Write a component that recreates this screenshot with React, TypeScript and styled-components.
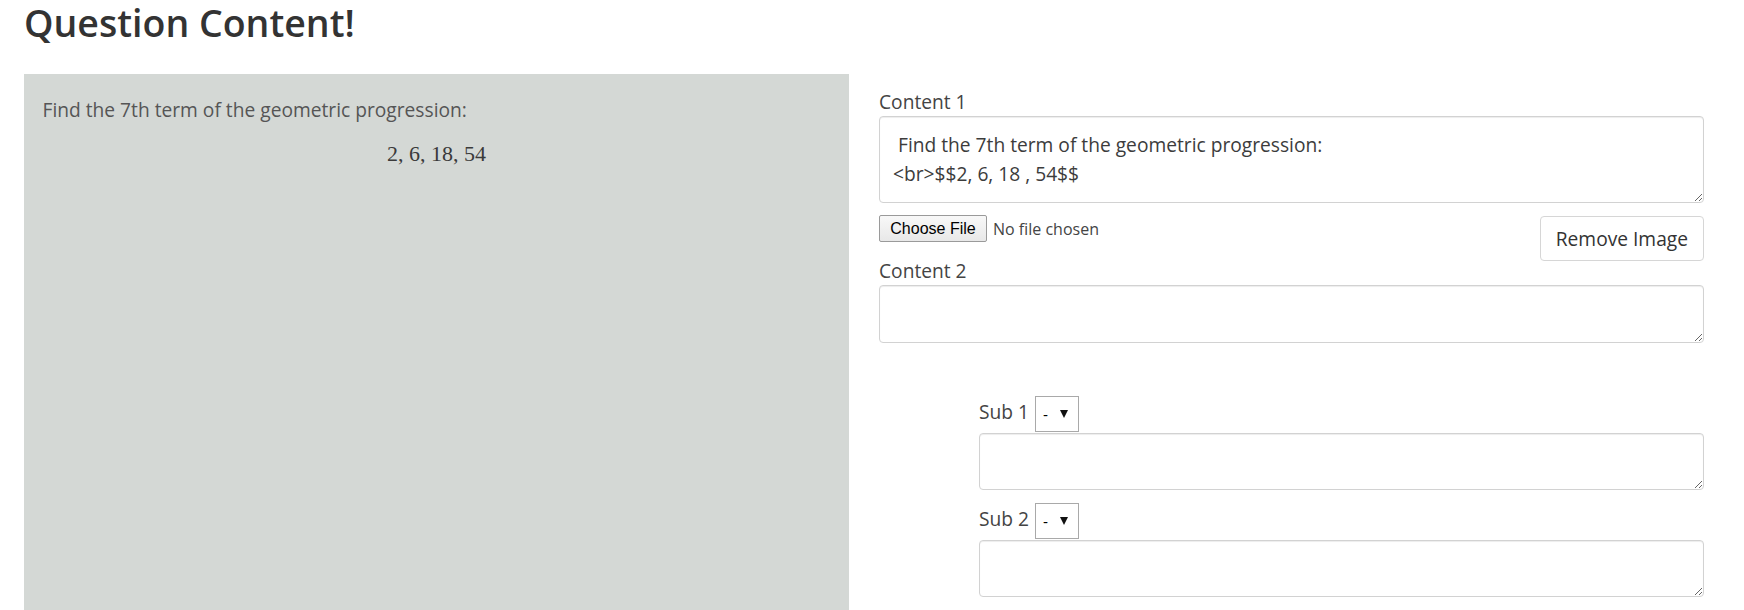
import React from "react";
import styled, { createGlobalStyle } from "styled-components";

const GlobalStyle = createGlobalStyle`
  html, body {
    margin: 0;
    padding: 0;
    background: #ffffff;
    font-family: "Open Sans", "Noto Sans", Arial, sans-serif;
    color: #333333;
    overflow: hidden;
  }
  * { box-sizing: border-box; }
`;

const Page = styled.div`
  padding: 0 0 0 22px;
`;

const Title = styled.h2`
  margin: 0 0 28px 0;
  padding-left: 2px;
  font-size: 37.5px;
  line-height: 46px;
  font-weight: 600;
  color: #333333;
`;

const Columns = styled.div`
  display: grid;
  grid-template-columns: 825px 825px;
  column-gap: 30px;
  padding-left: 2px;
  align-items: start;
`;

const PreviewPanel = styled.div`
  background: #d4d8d5;
  min-height: 560px;
  padding: 21.5px 18.5px;
`;

const PreviewText = styled.p`
  margin: 0;
  font-size: 19.2px;
  line-height: 28.8px;
  color: #555555;
`;

const MathLine = styled.div`
  text-align: center;
  font-family: "Liberation Serif", "DejaVu Serif", serif;
  font-size: 22px;
  line-height: 30px;
  color: #3a3a3a;
  margin-top: 15px;
`;

const FormColumn = styled.div`
  padding-top: 13px;
`;

const FieldLabel = styled.label`
  display: block;
  font-size: 19.2px;
  line-height: 29px;
  color: #444444;
`;

const TextArea = styled.textarea<{ $h: number; $padTop?: number }>`
  display: block;
  width: 100%;
  height: ${(p) => p.$h}px;
  margin: 0;
  padding: ${(p) => p.$padTop ?? 7}px 13px 6px 13px;
  border: 1px solid #d2d2d2;
  border-radius: 4px;
  box-shadow: inset 0 1px 1px rgba(0, 0, 0, 0.075);
  font-family: "Open Sans", "Noto Sans", Arial, sans-serif;
  font-size: 19.2px;
  line-height: 28.8px;
  color: #3c3c3c;
  background: #ffffff;
  resize: vertical;
  overflow: hidden;
  outline: none;
`;

const FileRow = styled.div`
  margin-top: 12px;
  margin-bottom: 13.5px;
`;

const RemoveButton = styled.button`
  float: right;
  height: 45px;
  margin-top: 1px;
  padding: 0 15px;
  border: 1px solid #d6d6d6;
  border-radius: 4px;
  background: #ffffff;
  font-family: "Open Sans", "Noto Sans", Arial, sans-serif;
  font-size: 19.2px;
  color: #333333;
  cursor: pointer;
`;

const FilePicker = styled.div`
  display: flex;
  align-items: center;
  height: 27px;
  gap: 6px;
`;

const ChooseButton = styled.button`
  height: 27px;
  width: 108px;
  padding: 0;
  border: 1px solid #9a9a9a;
  border-radius: 2px;
  background: linear-gradient(#f8f8f8, #e8e8e8);
  font-family: "Liberation Sans", Arial, sans-serif;
  font-size: 16px;
  color: #000000;
`;

const FileStatus = styled.span`
  font-size: 16px;
  color: #444444;
`;

const SubSection = styled.div`
  margin-top: 53.5px;
  padding-left: 100px;
  display: flex;
  flex-direction: column;
  gap: 13px;
`;

const SubBlock = styled.div`
  display: flex;
  flex-direction: column;
  gap: 1px;
`;

const SubHeader = styled.div`
  display: flex;
  align-items: flex-start;
  gap: 6px;
  height: 36px;
`;

const SubLabel = styled.span`
  font-size: 19.2px;
  line-height: 28.8px;
  color: #444444;
  padding-top: 1.5px;
`;

const SelectWrap = styled.span`
  position: relative;
  display: inline-block;
  width: 44px;
  height: 36px;
`;

const PlainSelect = styled.select`
  appearance: none;
  -webkit-appearance: none;
  width: 44px;
  height: 36px;
  margin: 0;
  padding: 0 0 0 7px;
  border: 1px solid #a9a9a9;
  border-radius: 0;
  background: #ffffff;
  font-family: "Liberation Sans", Arial, sans-serif;
  font-size: 15px;
  color: #000000;
  outline: none;
`;

const Arrow = styled.span`
  position: absolute;
  right: 11px;
  top: 14px;
  width: 0;
  height: 0;
  border-left: 4px solid transparent;
  border-right: 4px solid transparent;
  border-top: 8px solid #111111;
  pointer-events: none;
`;

const SubField: React.FC<{ label: string }> = ({ label }) => (
  <SubBlock>
    <SubHeader>
      <SubLabel>{label}</SubLabel>
      <SelectWrap>
        <PlainSelect defaultValue="-">
          <option value="-">-</option>
        </PlainSelect>
        <Arrow />
      </SelectWrap>
    </SubHeader>
    <TextArea $h={57} />
  </SubBlock>
);

export default function App() {
  return (
    <Page>
      <GlobalStyle />
      <Title>Question Content!</Title>
      <Columns>
        <PreviewPanel>
          <PreviewText>Find the 7th term of the geometric progression:</PreviewText>
          <MathLine>2, 6, 18, 54</MathLine>
        </PreviewPanel>
        <FormColumn>
          <FieldLabel>Content 1</FieldLabel>
          <TextArea
            $h={87}
            $padTop={14}
            defaultValue={" Find the 7th term of the geometric progression:\n<br>$$2, 6, 18 , 54$$"}
          />
          <FileRow>
            <RemoveButton>Remove Image</RemoveButton>
            <FilePicker>
              <ChooseButton>Choose File</ChooseButton>
              <FileStatus>No file chosen</FileStatus>
            </FilePicker>
          </FileRow>
          <FieldLabel>Content 2</FieldLabel>
          <TextArea $h={58} />
          <SubSection>
            <SubField label="Sub 1" />
            <SubField label="Sub 2" />
          </SubSection>
        </FormColumn>
      </Columns>
    </Page>
  );
}
